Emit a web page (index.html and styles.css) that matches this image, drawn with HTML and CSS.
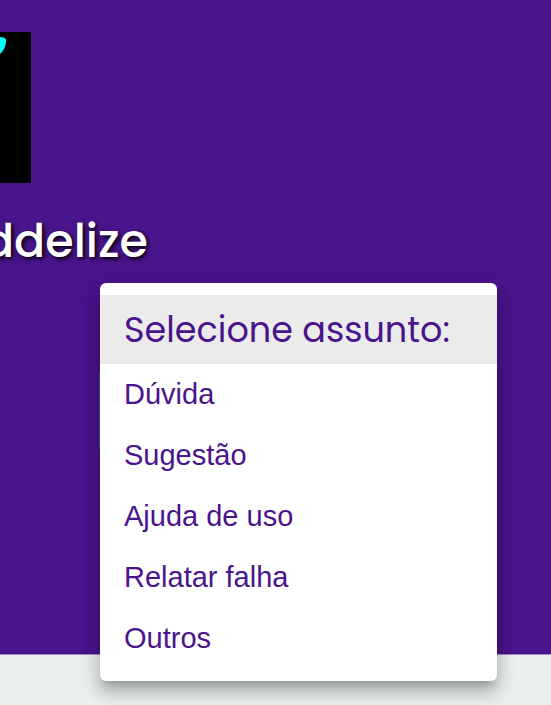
FILE: index.html
```html
<!DOCTYPE html>
<html lang="pt-BR">
<head>
<meta charset="utf-8">
<meta name="viewport" content="width=device-width, initial-scale=1">
<title>Contato</title>
<link rel="stylesheet" href="styles.css">
</head>
<body>
<main class="hero">
  <svg class="logo" viewBox="0 0 31 151" aria-hidden="true">
    <rect width="31" height="151" fill="#000"/>
    <path d="M0 5 C3 5 6 6 6 8 C6 14 4 18 0 22 Z" fill="#0ff"/>
  </svg>
  <h1 class="brand">ddelize</h1>
  <div class="subject">
    <div class="field"></div>
    <div class="menu">
      <button class="option selected" type="button">Selecione assunto:</button>
      <button class="option" type="button">Dúvida</button>
      <button class="option" type="button">Sugestão</button>
      <button class="option" type="button">Ajuda de uso</button>
      <button class="option" type="button">Relatar falha</button>
      <button class="option" type="button">Outros</button>
    </div>
  </div>
</main>
</body>
</html>
```
FILE: styles.css
```css
* {
  box-sizing: border-box;
}

body {
  min-height: 100vh;
  margin: 0;
  background: #ebeff0;
  font-family: "Liberation Sans", Arial, sans-serif;
}

.hero {
  padding: 32px 0 205px;
  background: #4a148c;
  border-bottom: 1px solid #a48bc6;
}

.logo {
  display: block;
  width: 31px;
  height: 151px;
}

.brand {
  display: flex;
  justify-content: flex-end;
  width: 148px;
  margin: 24px 0 8px;
  color: #fff;
  font-family: Poppins, Lato, sans-serif;
  font-size: 46px;
  font-weight: 500;
  line-height: 68px;
  text-shadow: 2px 2px 4px #000;
}

.subject {
  position: relative;
  margin: 0 54px 0 99px;
  padding-top: 88px;
}

.field {
  height: 78px;
  border: 1px solid #4650a5;
  border-radius: 2px;
}

.menu {
  position: absolute;
  top: 0;
  left: 1px;
  right: 0;
  padding: 12px 0;
  background: #fff;
  border-radius: 6px;
  box-shadow: 0 8px 8px -5px rgba(0, 0, 0, 0.2),
    0 12px 15px 2px rgba(0, 0, 0, 0.14),
    0 5px 21px 3px rgba(0, 0, 0, 0.12);
}

.option {
  display: block;
  width: 100%;
  padding: 8px 24px;
  border: 0;
  background: none;
  color: #4a148c;
  font-family: inherit;
  font-size: 29px;
  line-height: 45px;
  text-align: left;
  white-space: nowrap;
}

.option.selected {
  padding: 12px 24px;
  background: #ebebeb;
  font-family: Poppins, "Open Sans", sans-serif;
  font-size: 35px;
  font-weight: 400;
}
```
